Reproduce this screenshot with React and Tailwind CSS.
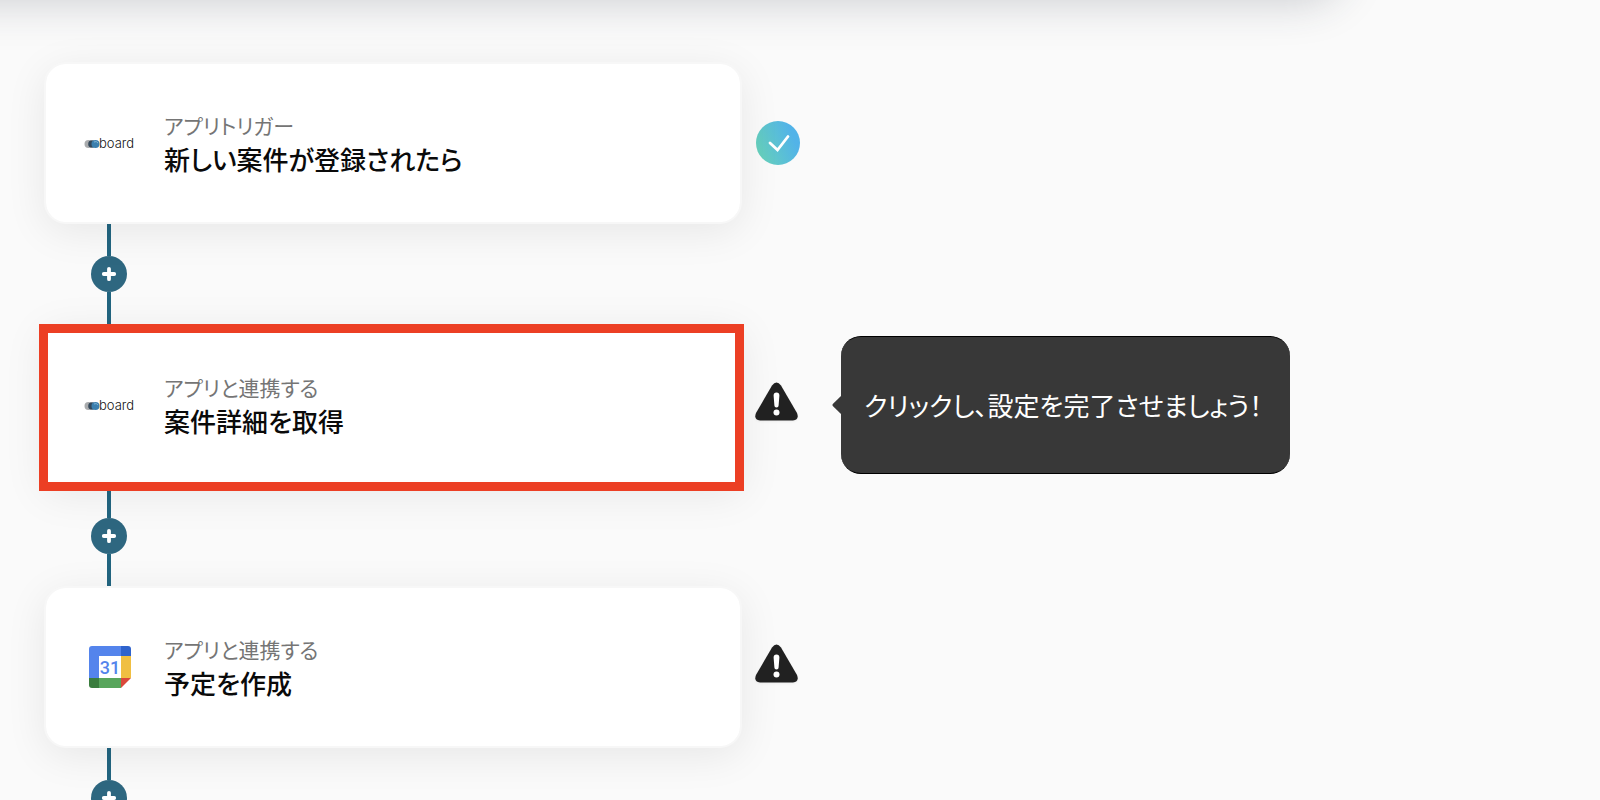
const JP = "font-['Noto_Sans_CJK_JP','Noto_Sans',sans-serif]";

function BoardLogo() {
  return (
    <svg viewBox="0 0 52 20" className="h-5 w-[52px]" role="img" aria-label="board">
      <circle cx="4.500" cy="11" r="4" fill="#a9abad" />
      <circle cx="8" cy="11" r="3.800" fill="#34495b" />
      <circle cx="11.500" cy="11" r="4" fill="#3a7fae" />
      <path d="M10 9a3 3 0 0 1 4 1" stroke="#7fb2d3" strokeWidth="1" fill="none" />
      <text x="15" y="15" fontSize="13" fontWeight="300" fontFamily="Inter, sans-serif" fill="#111">board</text>
    </svg>
  );
}

function CalendarLogo() {
  return (
    <svg viewBox="0 0 42 42" className="size-[42px]" role="img" aria-label="Google Calendar">
      <path d="M3 0h29v10H10v22H0V3a3 3 0 0 1 3-3z" fill="#5484ec" />
      <path d="M32 0h7a3 3 0 0 1 3 3v7H32z" fill="#2f63cd" />
      <path d="M32 10h10v22H32z" fill="#f0bf42" />
      <path d="M10 32h22v10H10z" fill="#58a55c" />
      <path d="M0 32h10v10H3a3 3 0 0 1-3-3z" fill="#3a7d3e" />
      <path d="M32 32h10L32 42z" fill="#da483b" />
      <path d="M10 10h22v22H10z" fill="#fff" />
      <text x="21" y="27.500" textAnchor="middle" fontSize="18" fontWeight="500" fontFamily="Roboto, sans-serif" fill="#5484ec">31</text>
    </svg>
  );
}

function DoneIcon() {
  return (
    <svg viewBox="0 0 44 44" className="size-11" role="img" aria-label="完了">
      <defs>
        <linearGradient id="done" x1="0" y1="0.7" x2="1" y2="0.3">
          <stop offset="0.05" stopColor="#66d0bd" />
          <stop offset="0.85" stopColor="#52b3e8" />
        </linearGradient>
      </defs>
      <circle cx="22" cy="22" r="22" fill="url(#done)" />
      <path d="M14 22l7.500 7L32 15.500" fill="none" stroke="#fff" strokeWidth="2.800" strokeLinecap="round" strokeLinejoin="miter" />
    </svg>
  );
}

function WarningIcon() {
  return (
    <svg viewBox="1 -1 44 48" className="h-12 w-11 overflow-visible drop-shadow-xs" role="img" aria-label="未設定">
      <path d="M17 3.500Q21.500-2.500 26 3.500L42 31Q44.500 37.800 38 38.500H5Q-1.500 37.800 1 31Z" fill="#212121" />
      <path d="M18.600 13.500a2.900 2.900 0 0 1 5.800 0L23.600 23.500a2.100 2.100 0 0 1-4.200 0z" fill="#fff" />
      <circle cx="21.500" cy="30.500" r="3" fill="#fff" />
    </svg>
  );
}

function Connector() {
  return (
    <div className="ml-[47px] flex h-[100px] w-9 flex-col items-center">
      <span className="w-1 flex-1 bg-[#226580]" />
      <button type="button" aria-label="ステップを追加" className="flex size-9 items-center justify-center rounded-full bg-[#2e6780]">
        <svg viewBox="0 0 16 16" className="size-4" aria-hidden="true">
          <path d="M8 2.800v10.400M2.800 8h10.400" stroke="#fff" strokeWidth="3.800" strokeLinecap="round" />
        </svg>
      </button>
      <span className="w-1 flex-1 bg-[#226580]" />
    </div>
  );
}

function Step({ logo, kind, title, done, selected, hint }) {
  return (
    <li>
      <div className="flex items-center">
        <button
          type="button"
          className={
            "relative flex h-[162px] w-full max-w-[698px] items-center gap-7 border-2 border-[#f7f7f7] bg-white bg-clip-padding px-[38px] text-left shadow-[0_8px_40px_rgba(0,0,0,0.08)] " +
            (selected ? "" : "rounded-[22px]")
          }
        >
          <span className="flex w-[52px] shrink-0 justify-center">{logo}</span>
          <span className="flex flex-col">
            <span className="text-[21px] leading-8 text-[#757575]">{kind}</span>
            <span className="text-[26px] leading-9 font-medium text-[#0a0a0a]">{title}</span>
          </span>
          {selected && <span className="absolute -top-0.5 -right-1 -bottom-[7px] -left-[7px] border-[9px] border-[#ec3f24] bg-transparent" />}
        </button>
        <span className="ml-3.5 shrink-0">{done ? <DoneIcon /> : <WarningIcon />}</span>
        {hint && (
          <div role="tooltip" className="relative ml-[41px] flex h-[138px] shrink-0 items-center rounded-[20px] border-y border-black bg-[#383838] pr-7 pl-[23px]">
            <span className="absolute top-1/2 -left-[9px] -mt-2.5">
              <svg viewBox="0 0 10 20" className="h-5 w-2.5" aria-hidden="true">
                <path d="M10 0L.8 9Q0 10 .8 11L10 20z" fill="#383838" />
              </svg>
            </span>
            <p className="text-[26px] leading-9 whitespace-nowrap text-white">{hint}</p>
          </div>
        )}
      </div>
      <Connector />
    </li>
  );
}

export default function App() {
  return (
    <div className={"h-screen overflow-hidden bg-[#fafafa] [font-feature-settings:'palt'] " + JP}>
      <header className="-mt-32 -ml-16 h-32 w-[88%] rounded-br-[40px] bg-white shadow-[0_2px_44px_rgba(40,50,70,0.22)]" />
      <main className="pt-[62px] pl-11">
        <ol>
          <Step logo={<BoardLogo />} kind="アプリトリガー" title="新しい案件が登録されたら" done />
          <Step logo={<BoardLogo />} kind="アプリと連携する" title="案件詳細を取得" selected hint="クリックし、設定を完了させましょう！" />
          <Step logo={<CalendarLogo />} kind="アプリと連携する" title="予定を作成" />
        </ol>
      </main>
    </div>
  );
}
